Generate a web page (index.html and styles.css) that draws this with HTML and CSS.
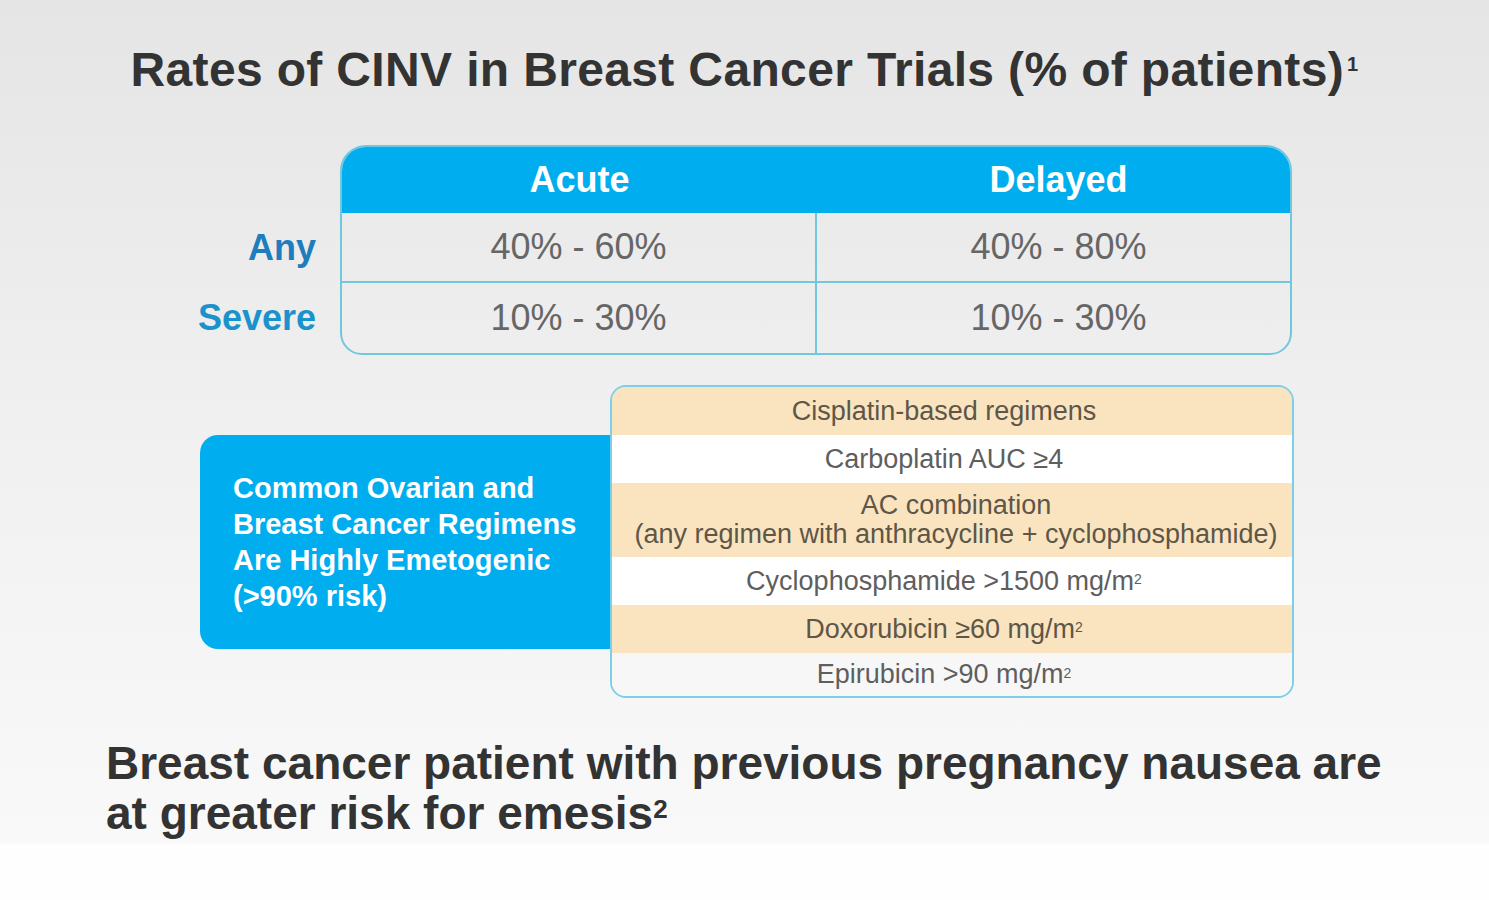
FILE: index.html
```html
<!DOCTYPE html>
<html lang="en">
<head>
<meta charset="utf-8">
<title>Rates of CINV in Breast Cancer Trials</title>
<link rel="stylesheet" href="styles.css">
</head>
<body>
<main class="slide">
  <h1 class="title">Rates of CINV in Breast Cancer Trials (% of patients)<sup class="ref">1</sup></h1>

  <section class="rates">
    <div class="row-labels">
      <div class="row-label label-any">Any</div>
      <div class="row-label label-severe">Severe</div>
    </div>
    <div class="cinv-table">
      <div class="head-cell">Acute</div>
      <div class="head-cell col-two">Delayed</div>
      <div class="cell cell-first row-one">40% - 60%</div>
      <div class="cell col-two row-one">40% - 80%</div>
      <div class="cell cell-first row-two">10% - 30%</div>
      <div class="cell col-two row-two">10% - 30%</div>
    </div>
  </section>

  <section class="regimens">
    <div class="risk-box">
      <p class="risk-text">Common Ovarian and<br>Breast Cancer Regimens<br>Are Highly Emetogenic<br>(&gt;90% risk)</p>
    </div>
    <div class="regimen-list">
      <div class="regimen tan">Cisplatin-based regimens</div>
      <div class="regimen white">Carboplatin AUC ≥4</div>
      <div class="regimen tan tall">AC combination<br>(any regimen with anthracycline + cyclophosphamide)</div>
      <div class="regimen white">Cyclophosphamide &gt;1500 mg/m<sup class="unit">2</sup></div>
      <div class="regimen tan">Doxorubicin ≥60 mg/m<sup class="unit">2</sup></div>
      <div class="regimen pale last">Epirubicin &gt;90 mg/m<sup class="unit">2</sup></div>
    </div>
  </section>

  <p class="note">Breast cancer patient with previous pregnancy nausea are<br>at greater risk for emesis<sup class="ref2">2</sup></p>
</main>
</body>
</html>
```

FILE: styles.css
```css
html, body {
  margin: 0;
  padding: 0;
}

body {
  width: 1489px;
  height: 900px;
  overflow: hidden;
  font-family: "Liberation Sans", Arial, sans-serif;
  background: linear-gradient(to bottom, #e5e5e5 0px, #f0f0f0 420px, #f9f9f9 842px, #fefefe 845px, #fefefe 900px);
}

.slide {
  padding-top: 42px;
}

.title {
  margin: 0;
  text-align: center;
  font-size: 48px;
  line-height: 56px;
  font-weight: bold;
  letter-spacing: 0.35px;
  color: #333333;
}

.ref {
  font-size: 20px;
  vertical-align: top;
  position: relative;
  top: -6px;
  margin-left: 3px;
}

/* ---------- rates table ---------- */
.rates {
  display: flex;
  margin-top: 47px;
  padding-left: 150px;
}

.row-labels {
  width: 190px;
  padding-top: 68px;
  box-sizing: border-box;
  padding-right: 24px;
}

.row-label {
  display: flex;
  align-items: center;
  justify-content: flex-end;
  font-size: 36px;
  font-weight: bold;
}

.label-any {
  height: 70px;
  color: #1d7dbd;
}

.label-severe {
  height: 70px;
  color: #1a93cc;
}

.cinv-table {
  width: 952px;
  box-sizing: border-box;
  border: 2px solid #72c7df;
  border-radius: 26px 26px 22px 22px;
  overflow: hidden;
  display: grid;
  grid-template-columns: 475px 1fr;
}

.head-cell {
  height: 66px;
  background: #00aeef;
  color: #ffffff;
  font-size: 36px;
  font-weight: bold;
  display: flex;
  align-items: center;
  justify-content: center;
}

.cell {
  display: flex;
  align-items: center;
  justify-content: center;
  font-size: 36px;
  color: #666666;
}

.col-two {
  padding-left: 10px;
}

.cell-first {
  border-right: 2px solid #72c7df;
}

.row-one {
  height: 68px;
  border-bottom: 2px solid #72c7df;
}

.row-two {
  height: 70px;
}

/* ---------- regimens ---------- */
.regimens {
  display: flex;
  align-items: center;
  margin-top: 30px;
  padding-left: 200px;
}

.risk-box {
  width: 410px;
  height: 214px;
  box-sizing: border-box;
  background: #00aeef;
  border-radius: 18px 0 0 18px;
  padding-left: 33px;
  display: flex;
  align-items: center;
}

.risk-text {
  margin: 0;
  color: #ffffff;
  font-size: 29px;
  font-weight: bold;
  line-height: 36px;
}

.regimen-list {
  width: 684px;
  box-sizing: border-box;
  border: 2px solid #7ccfe6;
  border-radius: 16px;
  overflow: hidden;
}

.regimen {
  height: 48px;
  padding-right: 16px;
  display: flex;
  align-items: center;
  justify-content: center;
  text-align: center;
  font-size: 27px;
  color: #5e5e5e;
}

.regimen.tall {
  height: 74px;
  line-height: 29px;
  padding-right: 0;
  padding-left: 8px;
}

.regimen.last {
  height: 43px;
}

.tan {
  background: #f9e4bf;
  color: #5e5648;
}

.white {
  background: #ffffff;
}

.pale {
  background: #f7f7f7;
}

.unit {
  font-size: 14px;
  vertical-align: top;
  position: relative;
  top: -2px;
}

/* ---------- note ---------- */
.note {
  margin: 40px 0 0 0;
  padding-left: 106px;
  font-size: 46px;
  line-height: 50px;
  font-weight: bold;
  color: #333333;
}

.ref2 {
  font-size: 26px;
  vertical-align: top;
  position: relative;
  top: -4px;
}
```
